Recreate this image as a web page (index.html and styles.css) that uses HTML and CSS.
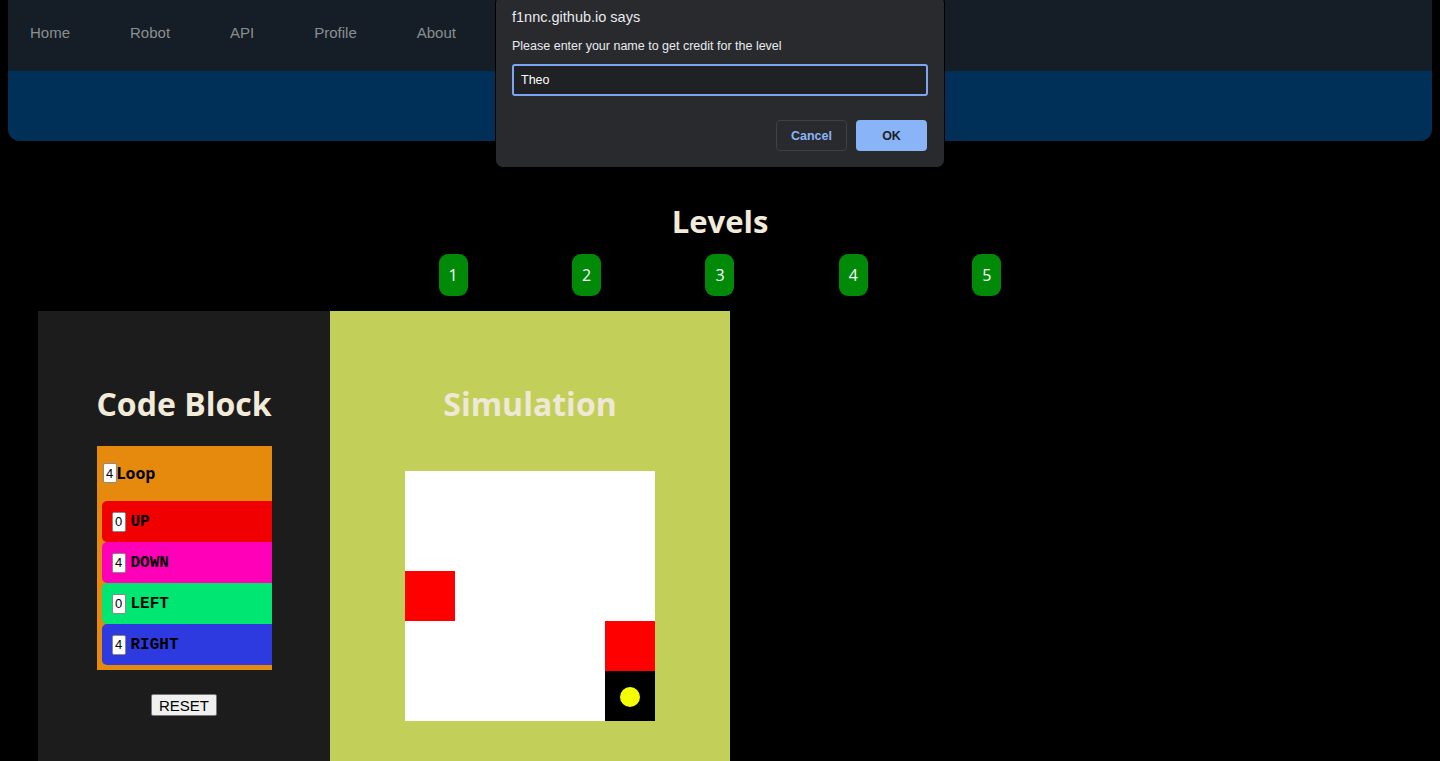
FILE: index.html
```html
<!DOCTYPE html>
<html>
<head>
<meta charset="utf-8">
<title>Robot Levels</title>
<link rel="stylesheet" href="styles.css">
</head>
<body>
<header class="site-header">
  <nav class="nav">
    <a class="nav-link" href="#">Home</a>
    <a class="nav-link" href="#">Robot</a>
    <a class="nav-link" href="#">API</a>
    <a class="nav-link" href="#">Profile</a>
    <a class="nav-link" href="#">About</a>
  </nav>
  <div class="banner"></div>
</header>

<main class="main">
  <section class="levels">
    <h2 class="levels-title">Levels</h2>
    <div class="level-row">
      <button class="level-btn">1</button>
      <button class="level-btn">2</button>
      <button class="level-btn">3</button>
      <button class="level-btn">4</button>
      <button class="level-btn">5</button>
    </div>
  </section>

  <section class="workspace">
    <div class="panel code-panel">
      <h2 class="panel-title">Code Block</h2>
      <div class="loop">
        <div class="loop-head"><span class="num">4</span><span class="loop-label">Loop</span></div>
        <div class="cmd cmd-up"><span class="num">0</span><span class="cmd-label">UP</span></div>
        <div class="cmd cmd-down"><span class="num">4</span><span class="cmd-label">DOWN</span></div>
        <div class="cmd cmd-left"><span class="num">0</span><span class="cmd-label">LEFT</span></div>
        <div class="cmd cmd-right"><span class="num">4</span><span class="cmd-label">RIGHT</span></div>
      </div>
      <button class="reset">RESET</button>
    </div>
    <div class="panel sim-panel">
      <h2 class="panel-title sim-title">Simulation</h2>
      <div class="grid">
        <div class="cell"></div><div class="cell"></div><div class="cell"></div><div class="cell"></div><div class="cell"></div>
        <div class="cell"></div><div class="cell"></div><div class="cell"></div><div class="cell"></div><div class="cell"></div>
        <div class="cell wall"></div><div class="cell"></div><div class="cell"></div><div class="cell"></div><div class="cell"></div>
        <div class="cell"></div><div class="cell"></div><div class="cell"></div><div class="cell"></div><div class="cell wall"></div>
        <div class="cell"></div><div class="cell"></div><div class="cell"></div><div class="cell"></div><div class="cell robot"><span class="dot"></span></div>
      </div>
    </div>
  </section>
</main>

<div class="dialog">
  <div class="dialog-title">f1nnc.github.io says</div>
  <div class="dialog-msg">Please enter your name to get credit for the level</div>
  <div class="dialog-input">Theo</div>
  <div class="dialog-actions">
    <button class="dbtn dbtn-cancel">Cancel</button>
    <button class="dbtn dbtn-ok">OK</button>
  </div>
</div>
</body>
</html>
```

FILE: styles.css
```css
html { background: #000; }
body {
  margin: 0 8px;
  background: #000;
  font-family: "Open Sans", "Noto Sans", sans-serif;
  overflow: hidden;
  height: 761px;
}
.site-header {
  background: #151e26;
  border-radius: 0 0 12px 12px;
}
.nav {
  height: 71px;
  display: flex;
  align-items: center;
  gap: 60px;
  padding-left: 22px;
  box-sizing: border-box;
  padding-bottom: 7px;
}
.nav-link {
  font-family: "Liberation Sans", Arial, sans-serif;
  font-size: 15px;
  color: #8b8e91;
  text-decoration: none;
}
.banner {
  height: 70px;
  background: #003058;
  border-radius: 0 0 12px 12px;
}

.levels {
  text-align: center;
  padding-top: 60px;
}
.levels-title {
  margin: 0;
  font-size: 31px;
  line-height: 40px;
  font-weight: 700;
  color: #f2ebd9;
}
.level-row {
  width: 667px;
  margin: 13px auto 0;
  display: flex;
  justify-content: space-around;
}
.level-btn {
  width: 29px;
  height: 42px;
  padding: 0;
  border: none;
  border-radius: 9px;
  background: #008a08;
  color: #fff;
  font-family: "Open Sans", sans-serif;
  font-size: 16px;
}
.workspace {
  display: flex;
  margin-top: 15px;
  margin-left: 30px;
}
.panel {
  height: 470px;
  display: flex;
  flex-direction: column;
  align-items: center;
  padding-top: 71px;
  box-sizing: border-box;
}
.code-panel {
  width: 292px;
  background: #1d1c1d;
}
.sim-panel {
  width: 400px;
  background: #c2d05a;
}
.panel-title {
  margin: 0;
  font-size: 32px;
  line-height: 44px;
  font-weight: 700;
  color: #f2ebd9;
}
.sim-title { color: #efe8d6; }

.loop {
  width: 175px;
  margin-top: 20px;
  background: #e68a0e;
  padding-bottom: 5px;
  overflow: hidden;
}
.loop-head {
  height: 55px;
  display: flex;
  align-items: center;
  padding-left: 6px;
  padding-bottom: 1px;
  box-sizing: border-box;
}
.num {
  display: inline-flex;
  align-items: center;
  justify-content: center;
  width: 14px;
  height: 20px;
  box-sizing: border-box;
  background: #fff;
  border: 1px solid #8a8a8a;
  border-radius: 2px;
  font-family: "Liberation Sans", Arial, sans-serif;
  font-size: 13px;
  color: #000;
}
.loop-label {
  font-family: "Open Sans", sans-serif;
  font-weight: 700;
  font-size: 16px;
  color: #000;
}
.cmd {
  height: 41px;
  margin-left: 5px;
  border-radius: 5px 0 0 5px;
  display: flex;
  align-items: center;
  padding-left: 10px;
  gap: 5px;
}
.cmd-label {
  font-family: "Liberation Mono", "Courier New", monospace;
  font-weight: 700;
  font-size: 16px;
  color: #000;
}
.cmd-up { background: #f00000; }
.cmd-down { background: #ff00b8; }
.cmd-left { background: #00e673; }
.cmd-right { background: #2c3ae0; }

.reset {
  margin-top: 24px;
  height: 22px;
  padding: 0 7px;
  font-family: "Liberation Sans", Arial, sans-serif;
  font-size: 15px;
  color: #000;
  background: #f0f0f0;
  border: 1px solid #767676;
  border-radius: 2px;
}

.grid {
  margin-top: 45px;
  width: 250px;
  display: grid;
  grid-template-columns: repeat(5, 50px);
  grid-auto-rows: 50px;
  background: #fff;
}
.cell.wall { background: #ff0000; }
.cell.robot {
  background: #000;
  display: flex;
  align-items: center;
  justify-content: center;
}
.dot {
  width: 20px;
  height: 20px;
  border-radius: 50%;
  background: #f5ff00;
  margin-top: 1px;
}

.dialog {
  position: fixed;
  top: -5px;
  left: 495px;
  width: 450px;
  box-sizing: border-box;
  padding: 10px 16px 16px;
  background: #292a2d;
  border: 1px solid #000;
  border-radius: 8px;
  font-family: "Liberation Sans", Arial, sans-serif;
  color: #e8eaed;
}
.dialog-title {
  font-size: 14.5px;
  line-height: 20px;
  margin-top: 1px;
}
.dialog-msg {
  font-size: 12.5px;
  line-height: 16px;
  margin-top: 11px;
}
.dialog-input {
  margin-top: 10px;
  height: 32px;
  box-sizing: border-box;
  border: 2px solid #7ba7f2;
  border-radius: 3px;
  background: #202124;
  font-size: 12.5px;
  padding-left: 7px;
  display: flex;
  align-items: center;
  color: #fff;
}
.dialog-actions {
  margin-top: 24px;
  display: flex;
  justify-content: flex-end;
  gap: 9px;
  padding-right: 1px;
}
.dbtn {
  width: 71px;
  height: 31px;
  border-radius: 4px;
  font-family: "Liberation Sans", Arial, sans-serif;
  font-size: 12.5px;
  font-weight: 700;
}
.dbtn-cancel {
  background: #292a2d;
  border: 1px solid #3f4145;
  color: #8ab4f8;
}
.dbtn-ok {
  background: #8ab4f8;
  border: none;
  color: #202124;
}
```
